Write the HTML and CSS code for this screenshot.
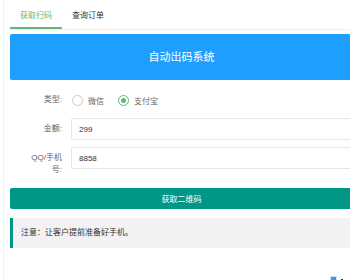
FILE: index.html
```html
<!DOCTYPE html>
<html lang="zh-CN">
<head>
    <meta charset="UTF-8">
    <title>自动出码系统</title>
    <link rel="stylesheet" href="styles.css">
</head>
<body>
    <div class="page">
        <div class="tabs">
            <span class="tab active">获取扫码</span>
            <span class="tab">查询订单</span>
        </div>

        <div class="container">
            <div class="header">自动出码系统</div>

            <form id="formulario">
                <div class="row">
                    <label class="form-label">类型:</label>
                    <div class="radios">
                        <span class="radio"><i></i>微信</span>
                        <span class="radio checked"><i></i>支付宝</span>
                    </div>
                </div>
                <div class="row">
                    <label class="form-label">金额:</label>
                    <input class="input" type="text" name="money" value="299">
                </div>
                <div class="row">
                    <label class="form-label">QQ/手机号:</label>
                    <input class="input" type="text" name="qq" value="8858">
                </div>

                <!-- botão -->
                <button type="button" class="btn">获取二维码</button>
            </form>

            <div class="notice">注意：让客户提前准备好手机。</div>
        </div>
    </div>

    <div class="float-tool"><span class="sq"></span><span class="dot"></span></div>
</body>
</html>
```

FILE: styles.css
```css
* {
    box-sizing: border-box;
}

html {
    overflow: hidden;
}

body {
    margin: 0;
    background: #fff;
    font-family: "Liberation Sans", "Noto Sans CJK SC", sans-serif;
    font-size: 8px;
    color: #333;
}

.page {
    margin-left: 3px;
    padding-left: 6px;
    border-left: 1px solid #f3f3f3;
    height: 280px;
}

.tabs {
    padding-top: 5px;
    border-bottom: 1px solid #eee;
    display: flex;
}

.tab {
    padding: 0 10px;
    line-height: 22px;
    border-bottom: 2px solid transparent;
    color: #333;
}

.tab.active {
    color: #5fb878;
    border-bottom-color: #5fb878;
}

.container {
    width: 343px;
}

.header {
    margin-top: 4px;
    height: 46px;
    line-height: 46px;
    background-color: #1e9fff;
    color: #fff;
    font-size: 11px;
    text-align: center;
    border-radius: 2px;
}

#formulario {
    margin-top: 9px;
}

.row {
    display: flex;
    min-height: 22px;
    margin-bottom: 7px;
}

.form-label {
    width: 60px;
    flex-shrink: 0;
    padding: 5px 8px 0 15px;
    line-height: 12px;
    text-align: right;
    color: #666;
}

.radios {
    display: flex;
    align-items: center;
    padding-left: 2px;
}

.radio {
    display: flex;
    align-items: center;
    margin-right: 14px;
    color: #666;
}

.radio i {
    width: 11px;
    height: 11px;
    border: 1px solid #c9c9c9;
    border-radius: 50%;
    margin-right: 5px;
    display: flex;
    align-items: center;
    justify-content: center;
}

.radio.checked i {
    border-color: #5fb878;
}

.radio.checked i::after {
    content: "";
    width: 5px;
    height: 5px;
    border-radius: 50%;
    background: #5fb878;
}

.input {
    flex: 1;
    height: 22px;
    margin-left: 1px;
    padding: 0 7px;
    border: 1px solid #e6e6e6;
    border-radius: 2px;
    font-family: inherit;
    font-size: 8px;
    color: #333;
    outline: none;
}

.btn {
    display: block;
    width: 100%;
    height: 21px;
    margin-top: 12px;
    border: none;
    border-radius: 2px;
    background-color: #009688;
    color: #fff;
    font-family: inherit;
    font-size: 8px;
    cursor: pointer;
}

.notice {
    margin-top: 9px;
    height: 30px;
    line-height: 30px;
    padding-left: 8px;
    background: #f2f2f2;
    border-left: 3px solid #009688;
    color: #333;
}

.float-tool {
    position: fixed;
    left: 330px;
    top: 276px;
    display: flex;
    align-items: center;
}

.float-tool .sq {
    width: 7px;
    height: 7px;
    background: #4a90e2;
    border: 1px solid #cfe3f7;
}

.float-tool .dot {
    width: 2px;
    height: 2px;
    margin-left: 4px;
    background: #333;
}
```
